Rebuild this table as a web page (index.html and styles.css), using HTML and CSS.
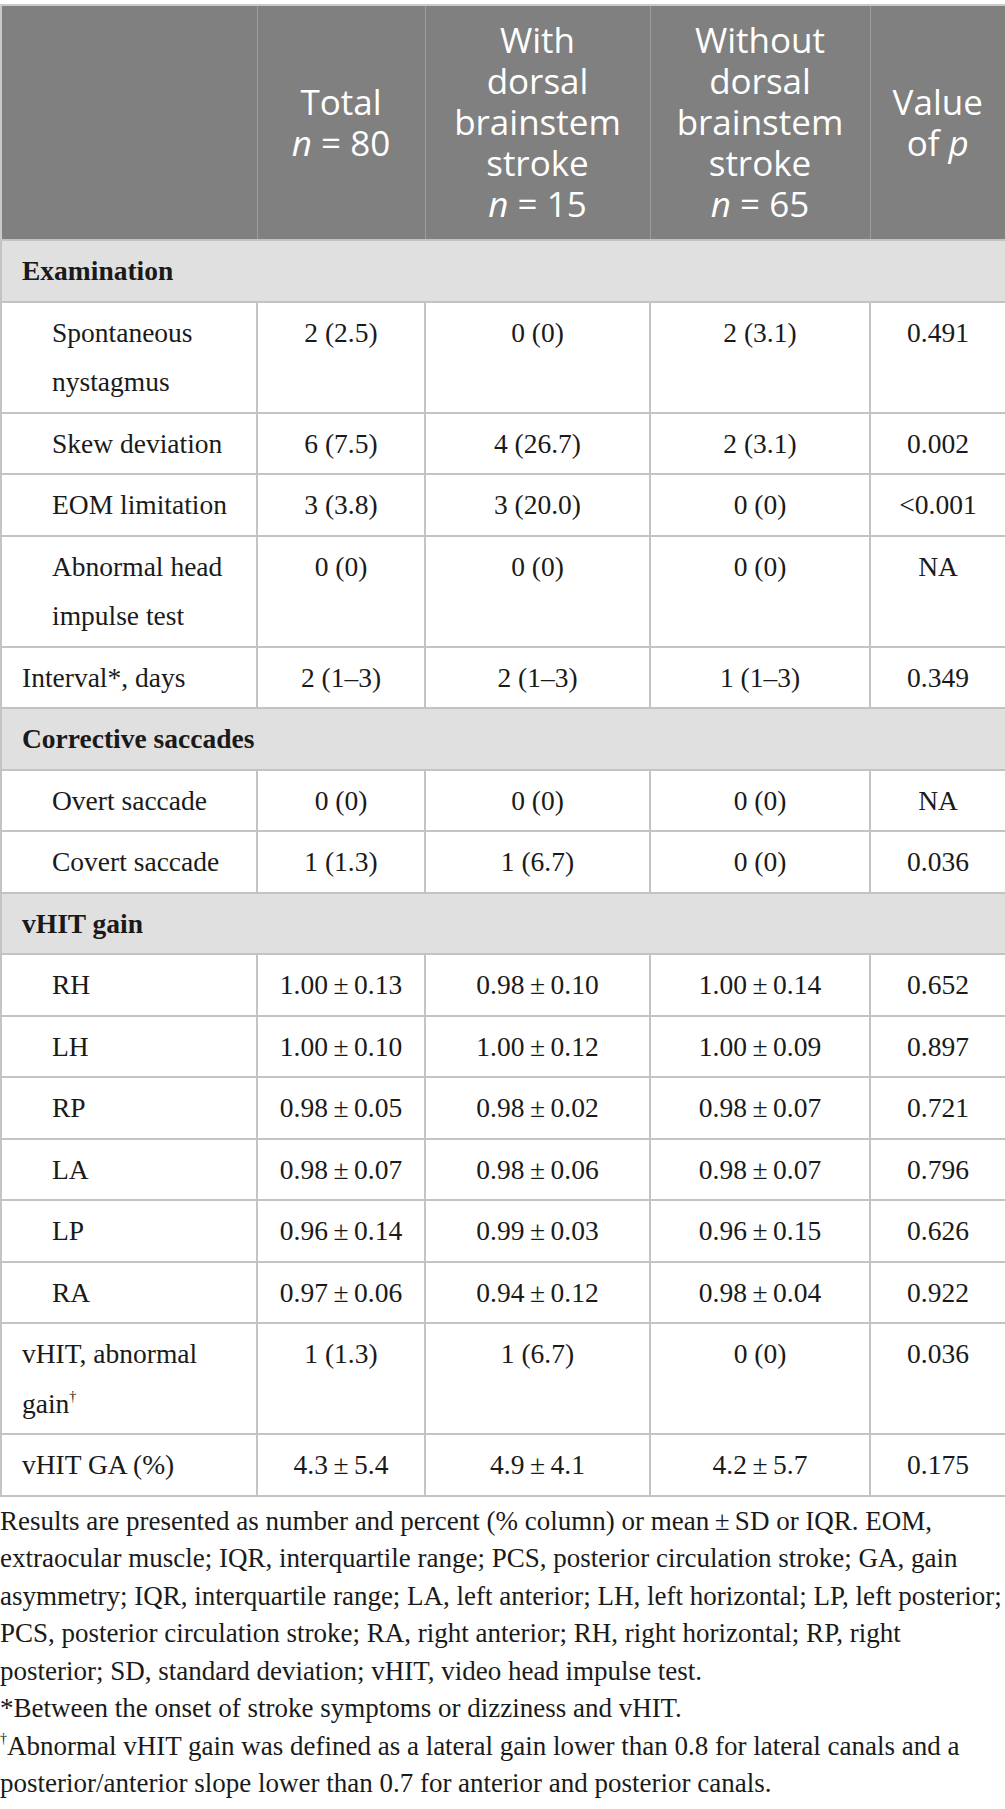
FILE: index.html
```html
<!DOCTYPE html>
<html lang="en">
<head>
<meta charset="utf-8">
<title>Table</title>
<link rel="stylesheet" href="styles.css">
</head>
<body>
<div class="page">
<table class="data">
  <colgroup>
    <col class="c-label">
    <col class="c-total">
    <col class="c-with">
    <col class="c-without">
    <col class="c-p">
  </colgroup>
  <thead>
    <tr>
      <th class="h-blank"></th>
      <th>Total<br><i>n</i>&nbsp;=&nbsp;80</th>
      <th>With<br>dorsal<br>brainstem<br>stroke<br><i>n</i>&nbsp;=&nbsp;15</th>
      <th>Without<br>dorsal<br>brainstem<br>stroke<br><i>n</i>&nbsp;=&nbsp;65</th>
      <th>Value<br>of <i>p</i></th>
    </tr>
  </thead>
  <tbody>
    <tr class="section"><td colspan="5">Examination</td></tr>
    <tr><td class="lbl ind">Spontaneous nystagmus</td><td>2 (2.5)</td><td>0 (0)</td><td>2 (3.1)</td><td>0.491</td></tr>
    <tr><td class="lbl ind">Skew deviation</td><td>6 (7.5)</td><td>4 (26.7)</td><td>2 (3.1)</td><td>0.002</td></tr>
    <tr><td class="lbl ind">EOM limitation</td><td>3 (3.8)</td><td>3 (20.0)</td><td>0 (0)</td><td>&lt;0.001</td></tr>
    <tr><td class="lbl ind">Abnormal head impulse test</td><td>0 (0)</td><td>0 (0)</td><td>0 (0)</td><td>NA</td></tr>
    <tr><td class="lbl">Interval*, days</td><td>2 (1–3)</td><td>2 (1–3)</td><td>1 (1–3)</td><td>0.349</td></tr>
    <tr class="section"><td colspan="5">Corrective saccades</td></tr>
    <tr><td class="lbl ind">Overt saccade</td><td>0 (0)</td><td>0 (0)</td><td>0 (0)</td><td>NA</td></tr>
    <tr><td class="lbl ind">Covert saccade</td><td>1 (1.3)</td><td>1 (6.7)</td><td>0 (0)</td><td>0.036</td></tr>
    <tr class="section"><td colspan="5">vHIT gain</td></tr>
    <tr><td class="lbl ind">RH</td><td>1.00&thinsp;±&thinsp;0.13</td><td>0.98&thinsp;±&thinsp;0.10</td><td>1.00&thinsp;±&thinsp;0.14</td><td>0.652</td></tr>
    <tr><td class="lbl ind">LH</td><td>1.00&thinsp;±&thinsp;0.10</td><td>1.00&thinsp;±&thinsp;0.12</td><td>1.00&thinsp;±&thinsp;0.09</td><td>0.897</td></tr>
    <tr><td class="lbl ind">RP</td><td>0.98&thinsp;±&thinsp;0.05</td><td>0.98&thinsp;±&thinsp;0.02</td><td>0.98&thinsp;±&thinsp;0.07</td><td>0.721</td></tr>
    <tr><td class="lbl ind">LA</td><td>0.98&thinsp;±&thinsp;0.07</td><td>0.98&thinsp;±&thinsp;0.06</td><td>0.98&thinsp;±&thinsp;0.07</td><td>0.796</td></tr>
    <tr><td class="lbl ind">LP</td><td>0.96&thinsp;±&thinsp;0.14</td><td>0.99&thinsp;±&thinsp;0.03</td><td>0.96&thinsp;±&thinsp;0.15</td><td>0.626</td></tr>
    <tr><td class="lbl ind">RA</td><td>0.97&thinsp;±&thinsp;0.06</td><td>0.94&thinsp;±&thinsp;0.12</td><td>0.98&thinsp;±&thinsp;0.04</td><td>0.922</td></tr>
    <tr><td class="lbl">vHIT, abnormal gain<sup>†</sup></td><td>1 (1.3)</td><td>1 (6.7)</td><td>0 (0)</td><td>0.036</td></tr>
    <tr><td class="lbl">vHIT GA (%)</td><td>4.3&thinsp;±&thinsp;5.4</td><td>4.9&thinsp;±&thinsp;4.1</td><td>4.2&thinsp;±&thinsp;5.7</td><td>0.175</td></tr>
  </tbody>
</table>
<div class="notes">
  <p>Results are presented as number and percent (% column) or mean&thinsp;±&thinsp;SD or IQR. EOM, extraocular muscle; IQR, interquartile range; PCS, posterior circulation stroke; GA, gain asymmetry; IQR, interquartile range; LA, left anterior; LH, left horizontal; LP, left posterior; PCS, posterior circulation stroke; RA, right anterior; RH, right horizontal; RP, right posterior; SD, standard deviation; vHIT, video head impulse test.</p>
  <p>*Between the onset of stroke symptoms or dizziness and vHIT.</p>
  <p><sup>†</sup>Abnormal vHIT gain was defined as a lateral gain lower than 0.8 for lateral canals and a posterior/anterior slope lower than 0.7 for anterior and posterior canals.</p>
</div>
</div>
</body>
</html>
```
FILE: styles.css
```css
html, body {
  margin: 0;
  padding: 0;
  background: #ffffff;
}

.page {
  width: 1005px;
  padding-top: 4px;
  font-family: "Liberation Serif", "Times New Roman", serif;
  color: #1a1a1a;
}

.data {
  width: 1005px;
  border-collapse: collapse;
  table-layout: fixed;
  font-size: 27.5px;
  line-height: 49.5px;
}

.c-label { width: 256px; }
.c-total { width: 168px; }
.c-with { width: 225px; }
.c-without { width: 220px; }
.c-p { width: 136px; }

.data thead th {
  background: #808080;
  color: #ffffff;
  font-family: "Open Sans", "Noto Sans", sans-serif;
  font-weight: 400;
  font-size: 35px;
  line-height: 41px;
  text-align: center;
  vertical-align: middle;
  padding: 13px 4px 15px;
  border-top: 2px solid #c9c9c9;
  border-left: 1px solid #9c9c9c;
  border-right: 1px solid #9c9c9c;
}

.data thead th:first-child {
  border-left: 2px solid #c9c9c9;
}

.data thead th:last-child {
  border-right: 2px solid #c9c9c9;
}

.data thead th i {
  font-style: italic;
}

.data td {
  border: 2px solid #c3c3c3;
  text-align: center;
  vertical-align: top;
  padding: 5px 4px 5px;
}

.data td.lbl {
  text-align: left;
  padding-left: 20px;
  padding-right: 6px;
}

.data td.lbl.ind {
  padding-left: 50px;
}

.data tr.section td {
  background: #e1e0e1;
  font-weight: 700;
  text-align: left;
  padding-left: 20px;
}

.data sup {
  font-size: 14px;
  line-height: 0;
  vertical-align: 12px;
}

.notes {
  margin-top: 6px;
  font-size: 27px;
  line-height: 37.5px;
}

.notes p {
  margin: 0;
}

.notes sup {
  font-size: 14px;
  line-height: 0;
  vertical-align: 12px;
}
```
